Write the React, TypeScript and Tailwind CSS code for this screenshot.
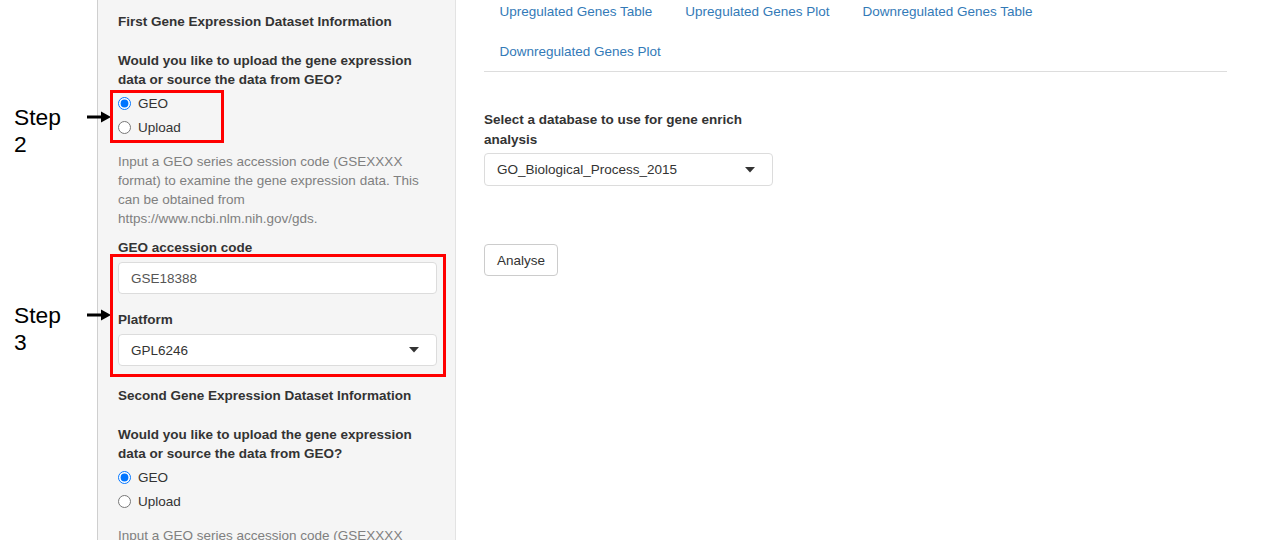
import React from 'react'

const tabs = [
  'Upregulated Genes Table',
  'Upregulated Genes Plot',
  'Downregulated Genes Table',
  'Downregulated Genes Plot',
]

function Caret() {
  return (
    <svg width="10" height="6" viewBox="0 0 10 6" className="shrink-0">
      <path d="M0 0 L10 0 L5 5.5 Z" fill="#333" />
    </svg>
  )
}

function FakeSelect({ value, className }: { value: string; className?: string }) {
  return (
    <div
      className={
        'flex h-[32px] items-center justify-between rounded-[4px] border border-[#dcdcdc] bg-white pl-[12px] pr-[17px] text-[#333] ' +
        (className ?? '')
      }
    >
      <span>{value}</span>
      <Caret />
    </div>
  )
}

function Radio({ label, checked }: { label: string; checked?: boolean }) {
  return (
    <label className="flex h-[24px] items-center gap-[7px] text-[#333]">
      <input
        type="radio"
        readOnly
        checked={!!checked}
        className="m-0 h-[13px] w-[13px] accent-[#0075ff]"
      />
      <span>{label}</span>
    </label>
  )
}

function DatasetBlock({ title }: { title: string }) {
  return (
    <div>
      <h5 className="font-bold text-[#333]">{title}</h5>
      <p className="mt-[20px] font-bold text-[#333]">
        Would you like to upload the gene expression data or source the data from GEO?
      </p>
      <div className="mt-[2px] flex flex-col">
        <Radio label="GEO" checked />
        <Radio label="Upload" />
      </div>
      <p className="mt-[13px] text-[#808080]">
        Input a GEO series accession code (GSEXXXX format) to examine the gene expression data. This
        can be obtained from https://www.ncbi.nlm.nih.gov/gds.
      </p>
    </div>
  )
}

function Arrow({ className }: { className: string }) {
  return (
    <svg width="25" height="12" viewBox="0 0 25 12" className={'absolute ' + className}>
      <rect x="0" y="4.5" width="16" height="3" fill="#000" />
      <path d="M14 0.5 L24 6 L14 11.5 Z" fill="#000" />
    </svg>
  )
}

export default function App() {
  return (
    <div className="relative h-[540px] overflow-hidden bg-white font-['Liberation_Sans',Arial,sans-serif] text-[13.5px] leading-[19px]">
      <div className="-mt-[8px] flex pl-[97px]">
        {/* Sidebar */}
        <aside className="w-[359px] shrink-0 border-l border-r border-l-[#cfcfcf] border-r-[#e3e3e3] bg-[#f5f5f5] pb-10 pl-[20px] pr-[18px] pt-[20px]">
          <DatasetBlock title="First Gene Expression Dataset Information" />

          <label className="mt-[10px] block font-bold text-[#333]">GEO accession code</label>
          <div className="mt-[5px] flex h-[32px] items-center rounded-[4px] border border-[#dcdcdc] bg-white px-[12px] text-[#555]">
            GSE18388
          </div>

          <label className="mt-[16px] block font-bold text-[#333]">Platform</label>
          <FakeSelect value="GPL6246" className="mt-[5px]" />

          <div className="mt-[20px]">
            <DatasetBlock title="Second Gene Expression Dataset Information" />
          </div>
        </aside>

        {/* Main panel */}
        <main className="ml-[28px] w-[743px] shrink-0">
          <ul className="flex flex-wrap border-b border-[#dddddd]">
            {tabs.map((t) => (
              <li key={t} className="mr-[2px]">
                <a className="block h-[39.5px] px-[15.5px] pt-[10px] text-[#337ab7]">{t}</a>
              </li>
            ))}
          </ul>

          <div className="mt-[38px] w-[289px]">
            <label className="block font-bold text-[#333] leading-[20px]">
              Select a database to use for gene enrich analysis
            </label>
            <FakeSelect value="GO_Biological_Process_2015" className="mt-[3px] h-[33px] pr-[17px]" />
          </div>

          <button className="mt-[58px] h-[32px] rounded-[4px] border border-[#cccccc] bg-white px-[12px] text-[#333]">
            Analyse
          </button>
        </main>
      </div>

      {/* Annotations */}
      <div className="absolute left-[14px] top-[104px] text-[22.8px] leading-[27px] text-black">
        Step
        <br />2
      </div>
      <Arrow className="left-[87px] top-[111px]" />
      <div className="absolute left-[110px] top-[90px] h-[53px] w-[114px] border-[3px] border-[#ff0000]" />

      <div className="absolute left-[14px] top-[302px] text-[22.8px] leading-[27px] text-black">
        Step
        <br />3
      </div>
      <Arrow className="left-[87px] top-[309px]" />
      <div className="absolute left-[110px] top-[254px] h-[123px] w-[336px] border-[3px] border-[#ff0000]" />
    </div>
  )
}
